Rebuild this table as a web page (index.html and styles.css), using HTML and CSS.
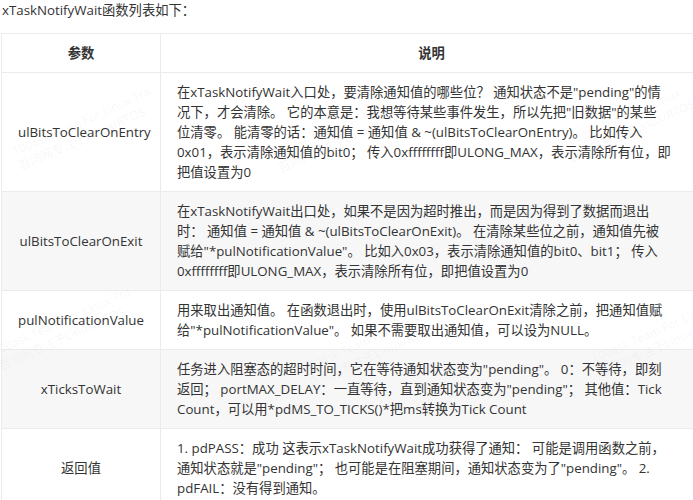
FILE: index.html
```html
<!DOCTYPE html>
<html lang="zh-CN">
<head>
<meta charset="utf-8">
<title>xTaskNotifyWait</title>
<link rel="stylesheet" href="styles.css">
</head>
<body>
<div class="page">
  <p class="title">xTaskNotifyWait函数列表如下：</p>
  <div class="table-wrap">
    <table class="params">
      <thead>
        <tr><th class="col-name">参数</th><th class="col-desc">说明</th></tr>
      </thead>
      <tbody>
        <tr>
          <td class="name">ulBitsToClearOnEntry</td>
          <td class="desc">在xTaskNotifyWait入口处，要清除通知值的哪些位？ 通知状态不是"pending"的情<br>况下，才会清除。 它的本意是：我想等待某些事件发生，所以先把"旧数据"的某些<br>位清零。 能清零的话：通知值 = 通知值 &amp; ~(ulBitsToClearOnEntry)。 比如传入<br>0x01，表示清除通知值的bit0； 传入0xffffffff即ULONG_MAX，表示清除所有位，即<br>把值设置为0</td>
        </tr>
        <tr class="alt">
          <td class="name">ulBitsToClearOnExit</td>
          <td class="desc">在xTaskNotifyWait出口处，如果不是因为超时推出，而是因为得到了数据而退出<br>时： 通知值 = 通知值 &amp; ~(ulBitsToClearOnExit)。 在清除某些位之前，通知值先被<br>赋给"*pulNotificationValue"。 比如入0x03，表示清除通知值的bit0、bit1； 传入<br>0xffffffff即ULONG_MAX，表示清除所有位，即把值设置为0</td>
        </tr>
        <tr>
          <td class="name">pulNotificationValue</td>
          <td class="desc">用来取出通知值。 在函数退出时，使用ulBitsToClearOnExit清除之前，把通知值赋<br>给"*pulNotificationValue"。 如果不需要取出通知值，可以设为NULL。</td>
        </tr>
        <tr class="alt">
          <td class="name">xTicksToWait</td>
          <td class="desc">任务进入阻塞态的超时时间，它在等待通知状态变为"pending"。 0：不等待，即刻<br>返回； portMAX_DELAY：一直等待，直到通知状态变为"pending"； 其他值：Tick<br>Count，可以用*pdMS_TO_TICKS()*把ms转换为Tick Count</td>
        </tr>
        <tr>
          <td class="name">返回值</td>
          <td class="desc">1. pdPASS：成功 这表示xTaskNotifyWait成功获得了通知： 可能是调用函数之前，<br>通知状态就是"pending"； 也可能是在阻塞期间，通知状态变为了"pending"。 2.<br>pdFAIL：没有得到通知。</td>
        </tr>
      </tbody>
    </table>
    <div class="wm wm1">100ask Team For Linux Tra<br>百问网专注于Linux/RTOS</div>
    <div class="wm wm2">100ask Team For Linux<br>百问网专注于Linux/RTOS</div>
    <div class="wm wm3">100ask Team For Linux<br>百问网专注于Linux/RTOS</div>
    <div class="wm wm4">100ask Team For Linux Tra<br>百问网专注于Linux/RTOS</div>
    <div class="wm wm5">100ask Team For Linux<br>百问网专注于Linux/RTOS</div>
    <div class="wm wm6">100ask Team For Linux<br>百问网专注于Linux/RTOS</div>
  </div>
</div>
</body>
</html>
```

FILE: styles.css
```css
html, body {
  margin: 0;
  padding: 0;
  background: #ffffff;
  overflow: hidden;
}

.page {
  width: 693px;
  font-family: "Open Sans", "Noto Sans CJK SC", sans-serif;
  font-size: 13.3px;
  line-height: 20px;
  color: #333333;
}

.title {
  margin: 0 0 13px 2px;
  line-height: 20px;
}

.table-wrap {
  position: relative;
  width: 693px;
  overflow: hidden;
  padding-left: 1px;
}

.params {
  border-collapse: collapse;
  width: 702px;
  table-layout: fixed;
}

.params th,
.params td {
  border: 1px solid #ebebeb;
  padding: 9px 16px;
}

.params th {
  font-weight: bold;
  text-align: center;
  background: #ffffff;
}

.col-name {
  width: 126px;
}

.params td.name {
  text-align: center;
  white-space: nowrap;
}

.params td.desc {
  white-space: nowrap;
}

.params tr.alt td {
  background: #f7f7f8;
}

.wm {
  position: absolute;
  color: rgba(120, 120, 120, 0.07);
  font-size: 12px;
  line-height: 16px;
  white-space: nowrap;
  transform: rotate(-24deg);
  pointer-events: none;
}

.wm1 { left: 10px; top: 80px; }
.wm2 { left: 270px; top: 85px; }
.wm3 { left: 560px; top: 75px; }
.wm4 { left: -10px; top: 280px; }
.wm5 { left: 300px; top: 300px; }
.wm6 { left: 590px; top: 290px; }
```
